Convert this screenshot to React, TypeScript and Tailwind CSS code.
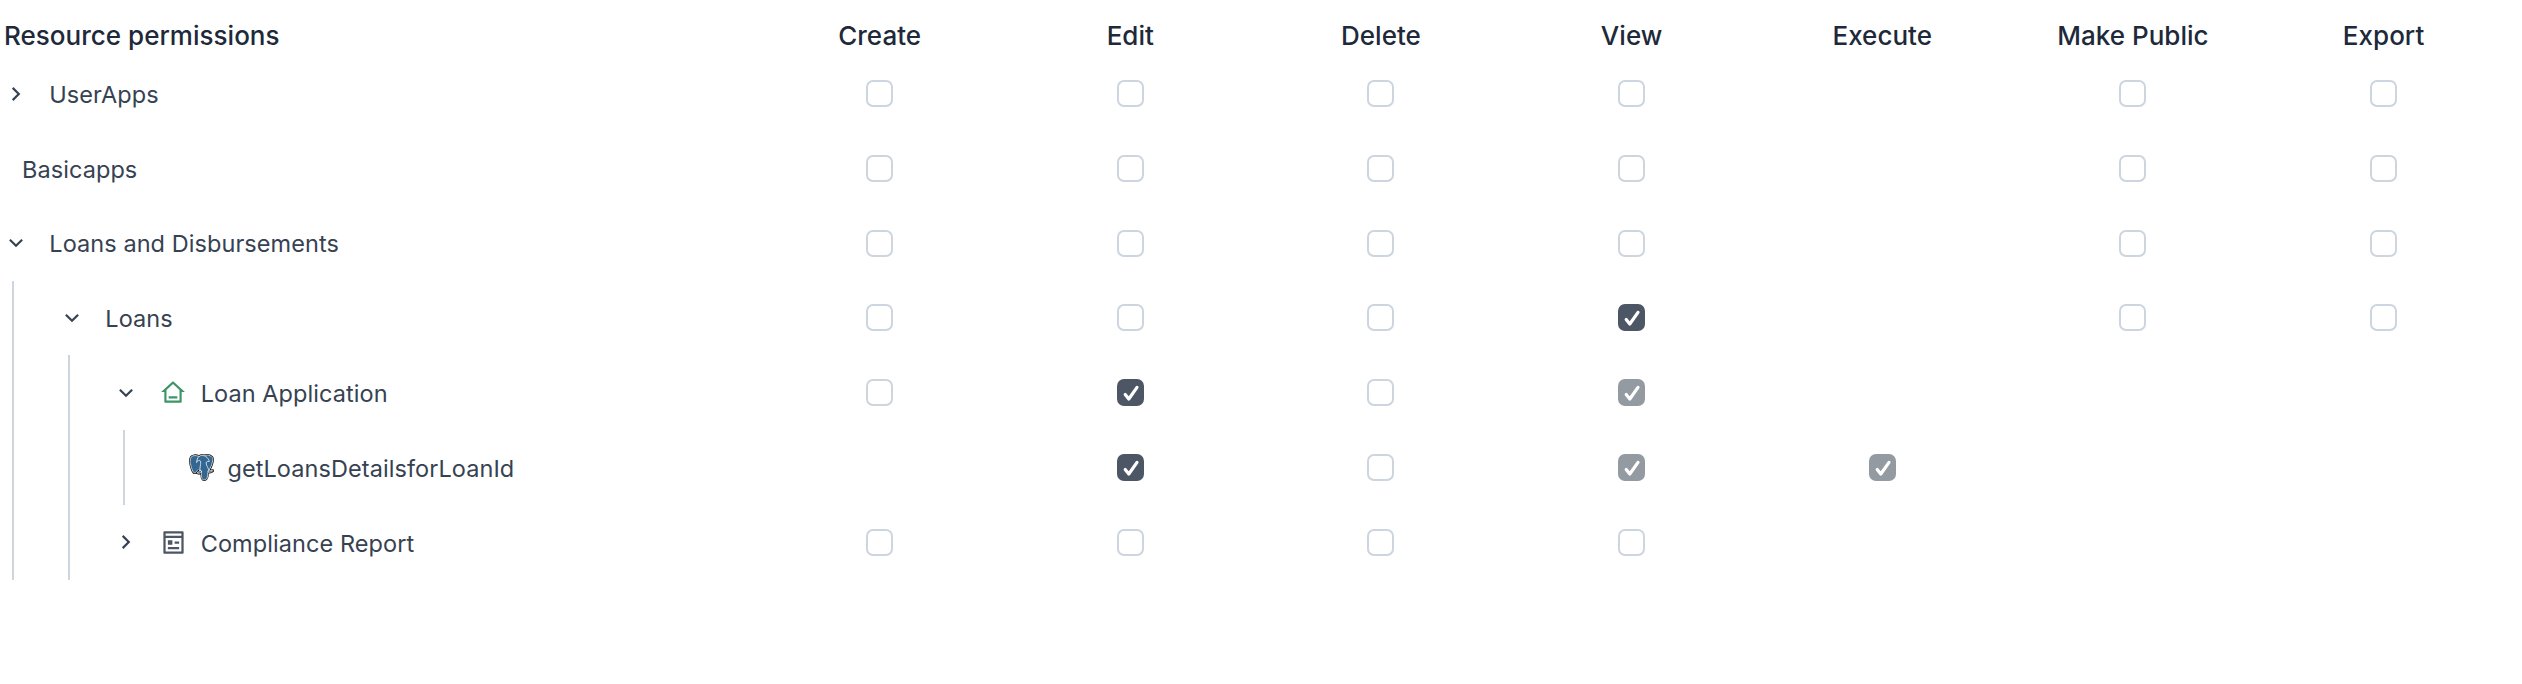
import { RiArrowDownSLine, RiArrowRightSLine } from "react-icons/ri";

type Check = "off" | "on" | "locked" | null;
type Icon = "page" | "report" | "query";

interface Row {
  label: string;
  guides: number;
  arrow?: "open" | "closed";
  icon?: Icon;
  checks: Check[];
}

const columns = ["Create", "Edit", "Delete", "View", "Execute", "Make Public", "Export"];

const rows: Row[] = [
  { label: "UserApps", guides: 0, arrow: "closed", checks: ["off", "off", "off", "off", null, "off", "off"] },
  { label: "Basicapps", guides: 0, checks: ["off", "off", "off", "off", null, "off", "off"] },
  { label: "Loans and Disbursements", guides: 0, arrow: "open", checks: ["off", "off", "off", "off", null, "off", "off"] },
  { label: "Loans", guides: 1, arrow: "open", checks: ["off", "off", "off", "on", null, "off", "off"] },
  { label: "Loan Application", guides: 2, arrow: "open", icon: "page", checks: ["off", "on", "off", "locked", null, null, null] },
  { label: "getLoansDetailsforLoanId", guides: 3, icon: "query", checks: [null, "on", "off", "locked", "locked", null, null] },
  { label: "Compliance Report", guides: 2, arrow: "closed", icon: "report", checks: ["off", "off", "off", "off", null, null, null] },
];

function Postgres() {
  return (
    <svg viewBox="0 0 432.071 445.383" preserveAspectRatio="none" className="h-[27px] w-[25px] shrink-0" fill="none" strokeLinecap="round" strokeLinejoin="round">
      <path
        fill="#000"
        stroke="#000"
        strokeWidth="37.4"
        d="M323.205,324.227c2.833-23.601,1.984-27.062,19.563-23.239l4.463,0.392c13.517,0.615,31.199-2.174,41.587-7c22.362-10.376,35.622-27.7,13.572-23.148c-50.297,10.376-53.755-6.655-53.755-6.655c53.111-78.803,75.313-178.836,56.149-203.322C352.514-5.534,262.036,26.049,260.522,26.869l-0.482,0.089c-9.938-2.062-21.06-3.294-33.554-3.496c-22.761-0.374-40.032,5.967-53.133,15.904c0,0-161.408-66.498-153.899,83.628c1.597,31.936,45.777,241.655,98.47,178.31c19.259-23.163,37.871-42.748,37.871-42.748c9.242,6.14,20.307,9.272,31.912,8.147l0.897-0.765c-0.281,2.876-0.157,5.689,0.359,9.019c-13.572,15.167-9.584,17.83-36.723,23.416c-27.457,5.659-11.326,15.734-0.797,18.367c12.768,3.193,42.305,7.716,62.268-20.224l-0.795,3.188c5.325,4.26,4.965,30.619,5.72,49.452c0.756,18.834,2.017,36.409,5.856,46.771c3.839,10.36,8.369,37.05,44.036,29.406c29.809-6.388,52.6-15.582,54.677-101.107"
      />
      <path
        fill="#336791"
        d="M402.395,271.23c-50.302,10.376-53.76-6.655-53.76-6.655c53.111-78.808,75.313-178.843,56.153-203.326c-52.27-66.785-142.752-35.2-144.262-34.38l-0.486,0.087c-9.938-2.063-21.06-3.292-33.56-3.496c-22.761-0.373-40.026,5.967-53.127,15.902c0,0-161.411-66.495-153.904,83.63c1.597,31.938,45.776,241.657,98.471,178.312c19.26-23.163,37.869-42.748,37.869-42.748c9.243,6.14,20.308,9.272,31.908,8.147l0.901-0.765c-0.28,2.876-0.152,5.689,0.361,9.019c-13.575,15.167-9.586,17.83-36.723,23.416c-27.459,5.659-11.328,15.734-0.796,18.367c12.768,3.193,42.307,7.716,62.266-20.224l-0.796,3.188c5.319,4.26,9.054,27.711,8.428,48.969c-0.626,21.259-1.044,35.854,3.147,47.254c4.191,11.4,8.368,37.05,44.042,29.406c29.809-6.388,45.256-22.942,47.405-50.555c1.525-19.631,4.976-16.729,5.194-34.28l2.768-8.309c3.192-26.611,0.507-35.196,18.872-31.203l4.463,0.392c13.517,0.615,31.208-2.174,41.591-7c22.358-10.376,35.618-27.7,13.573-23.148z"
      />
      <g stroke="#fff" strokeWidth="12.5">
        <path d="M215.866,286.484c-1.385,49.516,0.348,99.377,5.193,111.495c4.848,12.118,15.223,35.688,50.9,28.045c29.806-6.39,40.651-18.756,45.357-46.051c3.466-20.082,10.148-75.854,11.005-87.281" />
        <path d="M173.104,38.256c0,0-161.521-66.016-154.012,84.109c1.597,31.938,45.779,241.664,98.473,178.316c19.256-23.166,36.671-41.335,36.671-41.335" />
        <path d="M260.349,26.207c-5.591,1.753,89.848-34.889,144.087,34.417c19.159,24.484-3.043,124.519-56.153,203.329" />
        <path d="M348.282,263.953c0,0,3.461,17.036,53.764,6.653c22.04-4.552,8.776,12.774-13.577,23.155c-18.345,8.514-59.474,10.696-60.146-1.069c-1.729-30.355,21.647-21.133,19.96-28.739c-1.525-6.85-11.979-13.573-18.894-30.338c-6.037-14.633-82.796-126.849,21.287-110.183c3.813-0.789-27.146-99.002-124.553-100.599c-97.385-1.597-94.19,119.762-94.19,119.762" />
        <path d="M188.604,274.334c-13.577,15.166-9.584,17.829-36.723,23.417c-27.459,5.66-11.326,15.733-0.797,18.365c12.768,3.195,42.307,7.718,62.266-20.229c6.078-8.509-0.036-22.086-8.385-25.547c-4.034-1.671-9.428-3.765-16.361,3.994z" />
        <path d="M187.5,274.5c-2-14,1-34,5-60c4-26,12-48,8-90c-3-24-30-22-60-6" />
      </g>
    </svg>
  );
}

function RowIcon({ icon }: { icon: Icon }) {
  if (icon === "page") {
    return (
      <svg viewBox="0 0 24 24" fill="currentColor" className="ml-[21.5px] mr-[14.5px] size-[26px] shrink-0 text-[#3d9467]">
        <path d="M19 21H5C4.44772 21 4 20.5523 4 20V11L1 11L11.3273 1.6115C11.7087 1.26475 12.2913 1.26475 12.6727 1.6115L23 11L20 11V20C20 20.5523 19.5523 21 19 21ZM6 19H18V9.15745L12 3.7029L6 9.15745V19ZM8 15H16V17H8V15Z" />
      </svg>
    );
  }
  if (icon === "report") {
    return (
      <svg viewBox="0 0 24 24" fill="currentColor" className="ml-[21.5px] mr-[13.5px] size-[27px] shrink-0 text-[#4c5664]">
        <path
          fillRule="evenodd"
          d="M4 2H20C20.55 2 21 2.45 21 3V21C21 21.55 20.55 22 20 22H4C3.45 22 3 21.55 3 21V3C3 2.45 3.45 2 4 2ZM5 4V6H19V4H5ZM5 8V20H19V8H5ZM7 10H11V14H7V10ZM13 11H17V13H13V11ZM7 16H17V18H7V16Z"
        />
      </svg>
    );
  }
  return (
    <span className="ml-[63.5px] mr-[14px] flex">
      <Postgres />
    </span>
  );
}

function Checkbox({ state }: { state: Check }) {
  if (state === null) return null;
  if (state === "off") {
    return <span className="size-[27px] rounded-[7px] border-2 border-[#cdd5df] bg-white" />;
  }
  return (
    <span className={state === "on" ? "size-[27px] rounded-[7px] bg-[#4c5664]" : "size-[27px] rounded-[7px] bg-[#949aa2]"}>
      <svg viewBox="0 0 27 27" className="size-[27px]" fill="none" stroke="#fff" strokeWidth="3.2" strokeLinecap="round" strokeLinejoin="round">
        <path d="M8.2 15.4L11.8 20L20 8.4" />
      </svg>
    </span>
  );
}

const guideGaps = ["ml-[12px]", "ml-[54px]", "ml-[53px]"];
const arrowGaps = ["ml-[2.7px]", "ml-[44.7px]", "ml-[42.7px]"];

function LabelCell({ row }: { row: Row }) {
  const Arrow = row.arrow === "open" ? RiArrowDownSLine : RiArrowRightSLine;
  return (
    <div className="flex w-[754.3px] shrink-0 items-center">
      {guideGaps.slice(0, row.guides).map((gap) => (
        <span key={gap} className={`${gap} w-[2px] shrink-0 self-stretch bg-[#cdd5df]`} />
      ))}
      {row.arrow && (
        <span className={`${arrowGaps[row.guides]} flex shrink-0`}>
          <Arrow className="size-[26px] text-[#364252]" />
        </span>
      )}
      {row.icon ? <RowIcon icon={row.icon} /> : <span className={row.arrow ? "w-[20.6px] shrink-0" : "w-[22px] shrink-0"} />}
      <span className="whitespace-nowrap pt-[2.4px] text-[23.5px] leading-[30px] tracking-[0.07px] text-[#364252]">{row.label}</span>
    </div>
  );
}

export default function App() {
  return (
    <div className="min-h-[684px] w-[2522px] overflow-hidden bg-white font-['Inter',sans-serif]">
      <div className="flex h-[56.2px] pt-[20px] text-[26px] leading-[32px] font-medium tracking-[0.02px] text-[#202939]">
        <div className="w-[754.3px] shrink-0 pl-[4px]">Resource permissions</div>
        {columns.map((name) => (
          <div key={name} className="w-[250.67px] shrink-0 text-center">
            {name}
          </div>
        ))}
      </div>
      {rows.map((row) => (
        <div key={row.label} className="flex h-[74.8px]">
          <LabelCell row={row} />
          {row.checks.map((state, i) => (
            <div key={columns[i]} className="flex w-[250.67px] shrink-0 items-center justify-center">
              <Checkbox state={state} />
            </div>
          ))}
        </div>
      ))}
    </div>
  );
}
